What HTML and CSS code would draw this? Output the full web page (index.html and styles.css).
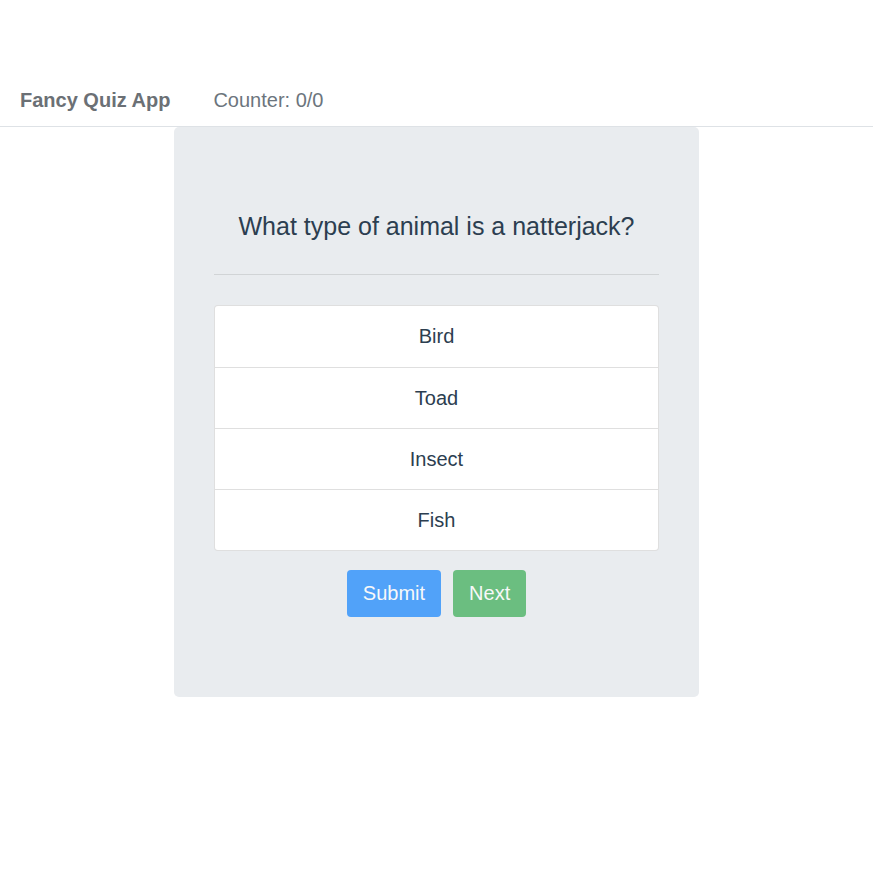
FILE: index.html
```html
<!DOCTYPE html>
<html>
<head>
<meta charset="utf-8">
<link rel="stylesheet" href="styles.css">
</head>
<body>
<nav class="navbar">
  <span class="brand">Fancy Quiz App</span>
  <span class="counter">Counter: 0/0</span>
</nav>
<main class="jumbotron">
  <p class="question">What type of animal is a natterjack?</p>
  <hr class="divider">
  <ul class="answers">
    <li class="answer">Bird</li>
    <li class="answer">Toad</li>
    <li class="answer">Insect</li>
    <li class="answer">Fish</li>
  </ul>
  <div class="actions">
    <button class="btn btn-primary" disabled>Submit</button>
    <button class="btn btn-success" disabled>Next</button>
  </div>
</main>
</body>
</html>
```
FILE: styles.css
```css
* { box-sizing: border-box; }
html, body { margin: 0; padding: 0; background: #fff; }
body {
  font-family: "Liberation Sans", Arial, sans-serif;
  color: #2c3e50;
}
.navbar {
  margin-top: 71px;
  height: 56px;
  border-bottom: 1px solid #dee2e6;
  display: flex;
  align-items: center;
  padding: 2px 0 0 20px;
  gap: 43px;
  font-size: 20px;
  line-height: 30px;
}
.brand { font-weight: bold; color: #6b7075; }
.counter { color: #6c757d; }
.jumbotron {
  width: 525px;
  margin: 0 auto;
  height: 570px;
  background: #e9ecef;
  border-radius: 5px;
  padding: 84px 40px 0;
}
.question {
  margin: 0;
  text-align: center;
  font-size: 25px;
  line-height: 30px;
}
.divider {
  margin: 33px 0 30px;
  border: 0;
  border-top: 1px solid rgba(0,0,0,0.1);
}
.answers {
  list-style: none;
  margin: 0;
  padding: 0;
  background: #fff;
  border: 1px solid rgba(0,0,0,0.125);
  border-radius: 4px;
}
.answer {
  height: 61px;
  display: flex;
  align-items: center;
  justify-content: center;
  font-size: 20px;
}
.answer + .answer { border-top: 1px solid rgba(0,0,0,0.125); }
.actions {
  display: flex;
  justify-content: center;
  gap: 12px;
  margin-top: 19px;
}
.btn {
  font-family: inherit;
  font-size: 20px;
  line-height: 29px;
  padding: 8px 15px;
  border: 1px solid transparent;
  border-radius: 4px;
  color: #fff;
  opacity: 0.65;
}
.btn-primary { background: #007bff; }
.btn-success { background: #28a745; }
```
